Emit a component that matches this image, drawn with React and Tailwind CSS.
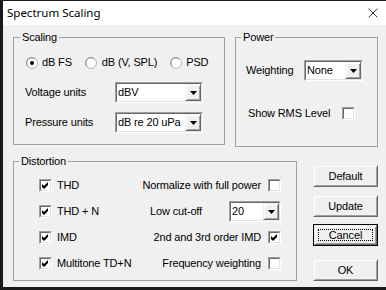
import React from 'react';

function Radio({ checked }) {
  return (
    <svg width="12" height="12" viewBox="0 0 12 12" className="shrink-0">
      <circle cx="6" cy="6" r="5.5" fill="#fff" stroke="#b4b4b4" />
      <path d="M2.2 9.2 A4.6 4.6 0 0 1 9.2 2.2" fill="none" stroke="#8a8a8a" />
      {checked && <circle cx="6" cy="6" r="2" fill="#000" />}
    </svg>
  );
}

function Check({ checked }) {
  return (
    <span className="w-[13px] h-[13px] shrink-0 border border-t-[#a0a0a0] border-l-[#a0a0a0] border-r-white border-b-white">
      <span className="w-full h-full flex items-center justify-center bg-white border border-t-[#696969] border-l-[#696969] border-r-[#e3e3e3] border-b-[#e3e3e3]">
        {checked && (
          <svg width="7" height="7" viewBox="0 0 7 7">
            <path d="M0 2 L2 4 L6 0 L6 3 L2 7 L0 5 Z" fill="#000" />
          </svg>
        )}
      </span>
    </span>
  );
}

function Select({ value, className }) {
  return (
    <div className={`h-[21px] shrink-0 border border-t-[#a0a0a0] border-l-[#a0a0a0] border-r-white border-b-white ${className}`}>
      <div className="h-full flex items-center bg-white border border-t-[#696969] border-l-[#696969] border-r-[#e3e3e3] border-b-[#e3e3e3]">
        <span className="flex-1 pl-[1px] leading-[13px] whitespace-nowrap overflow-hidden">{value}</span>
        <span className="w-[16px] h-full flex items-center justify-center bg-[#f0f0f0] border border-t-[#f0f0f0] border-l-[#f0f0f0] border-r-[#696969] border-b-[#696969] shadow-[inset_1px_1px_0_#fff,inset_-1px_-1px_0_#a0a0a0]">
          <svg width="7" height="4" viewBox="0 0 7 4">
            <path d="M0 0 H7 L3.5 4 Z" fill="#000" />
          </svg>
        </span>
      </div>
    </div>
  );
}

function Btn({ children, focused, className = '' }) {
  return (
    <div className={`h-[22px] w-[65px] ${focused ? 'border border-black' : ''} ${className}`}>
      <div className="relative h-full flex items-center justify-center bg-[#f0f0f0] border border-t-[#f0f0f0] border-l-[#f0f0f0] border-r-[#696969] border-b-[#696969] shadow-[inset_1px_1px_0_#fff,inset_-1px_-1px_0_#a0a0a0]">
        <span className="leading-[13px]">{children}</span>
        {focused && <span className="absolute inset-[3px] border border-dotted border-black" />}
      </div>
    </div>
  );
}

function Group({ title, className, legendClass = 'ml-[5px]', children }) {
  return (
    <fieldset className={`border border-[#a0a0a0] shrink-0 ${className}`}>
      <legend className={`px-[2px] leading-[13px] ${legendClass}`}>{title}</legend>
      {children}
    </fieldset>
  );
}

export default function App() {
  const leftChecks = ['THD', 'THD + N', 'IMD', 'Multitone TD+N'];

  return (
    <div className="w-[386px] h-[290px] overflow-hidden flex flex-col bg-[#f0f0f0] border-l-[3px] border-t border-b-[3px] border-[#1a1a1a] text-black text-[11px] tracking-[-0.15px] font-['Liberation_Sans',Arial,sans-serif]">
      <div className="h-[24px] shrink-0 bg-white flex items-center justify-between pl-[4px] pr-[8px]">
        <span className="text-[11.5px] tracking-normal font-['Noto_Sans',sans-serif]">Spectrum Scaling</span>
        <svg width="10" height="10" viewBox="0 0 10 10">
          <path d="M0.5 0.5 L9.5 9.5 M9.5 0.5 L0.5 9.5" stroke="#222" strokeWidth="0.9" />
        </svg>
      </div>

      <div className="pt-[6px] pl-[10px]">
        <div className="flex items-start">
          <Group title="Scaling" className="w-[212px] h-[114px]" legendClass="ml-[6px]">
            <div className="pl-[11px] pt-[12px]">
              <div className="flex items-center h-[13px] gap-[13px] pl-[1px]">
                <label className="flex items-center gap-[4px]"><Radio checked />dB FS</label>
                <label className="flex items-center gap-[5px]"><Radio />dB (V, SPL)</label>
                <label className="flex items-center gap-[4px]"><Radio />PSD</label>
              </div>
              <div className="flex items-center mt-[13px]">
                <span className="w-[90px]">Voltage units</span>
                <Select value="dBV" className="w-[88px]" />
              </div>
              <div className="flex items-center mt-[9px]">
                <span className="w-[90px]">Pressure units</span>
                <Select value="dB re 20 uPa" className="w-[88px]" />
              </div>
            </div>
          </Group>

          <Group title="Power" className="ml-[10px] w-[143px] h-[116px]">
            <div className="pl-[10px] pt-[16px]">
              <div className="flex items-center">
                <span className="w-[58px]">Weighting</span>
                <Select value="None" className="w-[59px]" />
              </div>
              <div className="flex items-center h-[13px] mt-[26px] pl-[2px]">
                <span className="w-[94px]">Show RMS Level</span>
                <Check />
              </div>
            </div>
          </Group>
        </div>

        <div className="flex items-start mt-[8px]">
          <Group title="Distortion" className="w-[284px] h-[126px]">
            <div className="pt-[7px] pl-[25px] pr-[15px] flex flex-col gap-[5px]">
              {leftChecks.map((label, i) => (
                <div key={label} className="h-[21px] flex items-center justify-between">
                  <div className="flex items-center gap-[5px]">
                    <Check checked />
                    <span>{label}</span>
                  </div>
                  {i === 0 && (
                    <div className="flex items-center gap-[7px]">
                      <span>Normalize with full power</span>
                      <Check />
                    </div>
                  )}
                  {i === 1 && (
                    <div className="flex items-center gap-[27px]">
                      <span>Low cut-off</span>
                      <Select value="20" className="w-[52px]" />
                    </div>
                  )}
                  {i === 2 && (
                    <div className="flex items-center gap-[7px]">
                      <span>2nd and 3rd order IMD</span>
                      <Check checked />
                    </div>
                  )}
                  {i === 3 && (
                    <div className="flex items-center gap-[7px]">
                      <span>Frequency weighting</span>
                      <Check />
                    </div>
                  )}
                </div>
              ))}
            </div>
          </Group>

          <div className="ml-[16px] mt-[10px] flex flex-col">
            <Btn>Default</Btn>
            <Btn className="mt-[8px]">Update</Btn>
            <Btn focused className="mt-[7px]">Cancel</Btn>
            <Btn className="mt-[13px]">OK</Btn>
          </div>
        </div>
      </div>
    </div>
  );
}
